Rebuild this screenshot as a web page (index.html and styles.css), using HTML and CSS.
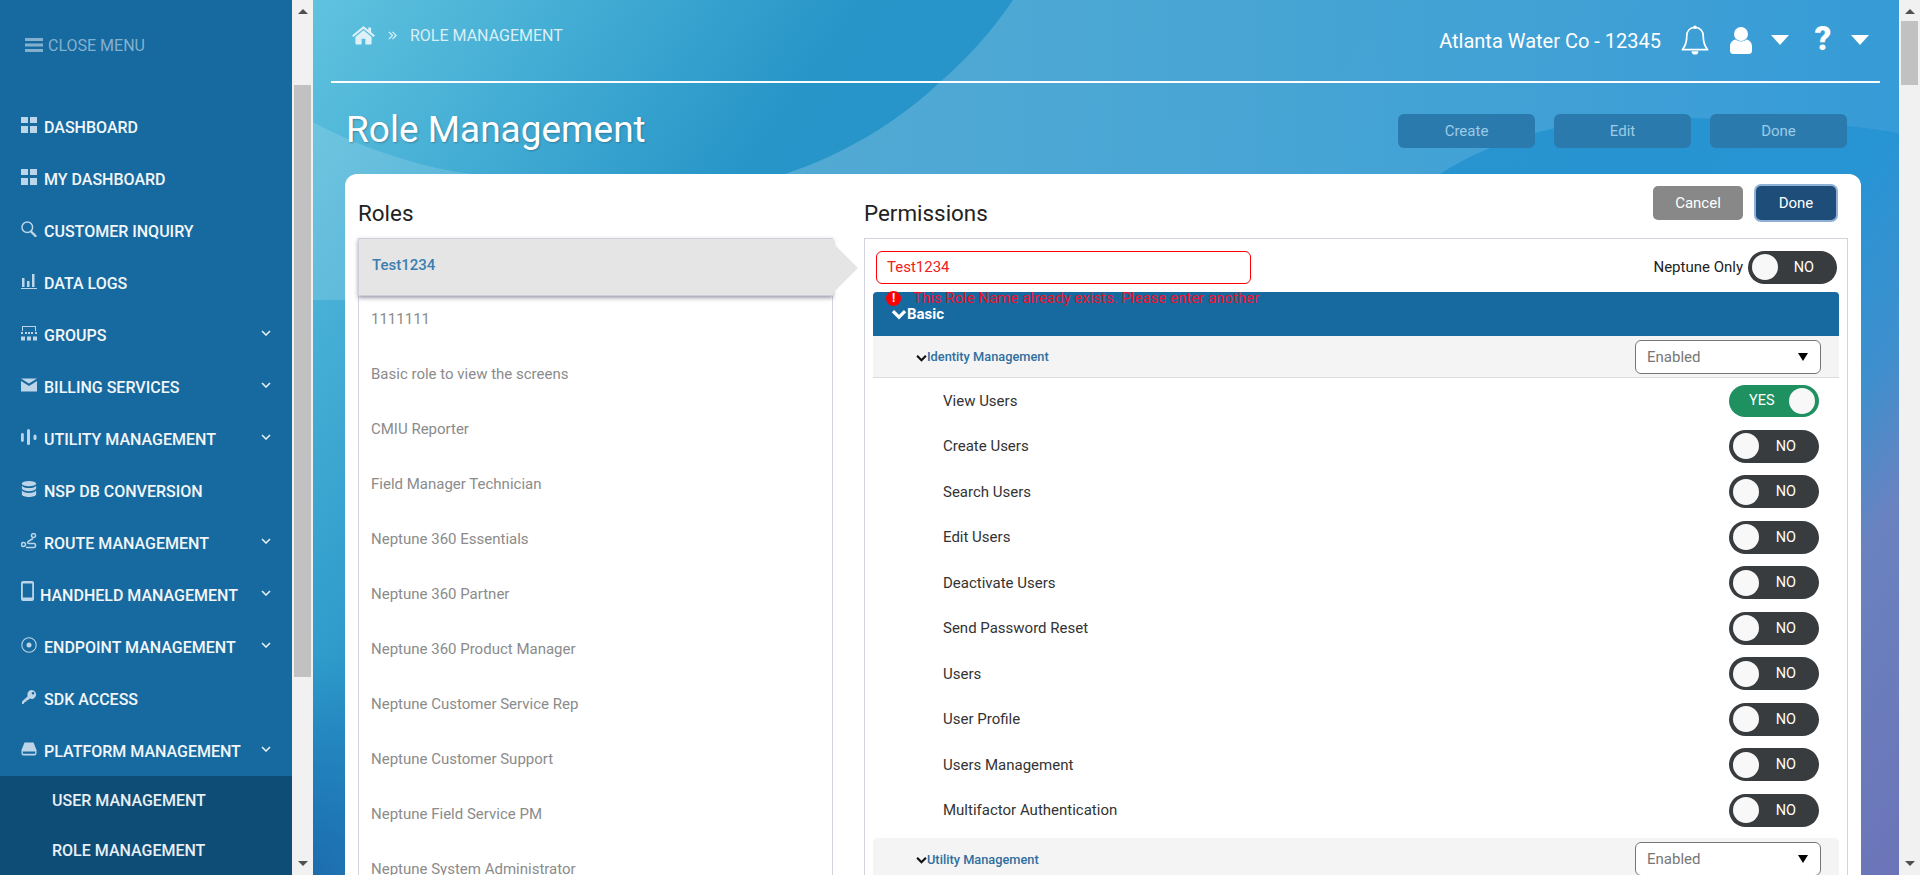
FILE: index.html
```html
<!DOCTYPE html>
<html lang="en">
<head>
<meta charset="utf-8">
<title>Role Management</title>
<link rel="stylesheet" href="styles.css">
</head>
<body>
<aside class="sidebar">
  <div class="close-menu">
    <svg class="burger" viewBox="0 0 18 14"><path d="M0 0h18v3H0zM0 5.500h18v3H0zM0 11h18v3H0z"/></svg>
    <span>CLOSE MENU</span>
  </div>
  <nav class="nav">
    <a class="nav-item"><svg class="ico" viewBox="0 0 16 16"><path d="M0 0h7v6H0zM9 0h7v6H9zM0 9h7v7H0zM9 9h7v7H9z"/></svg><span>DASHBOARD</span></a>
    <a class="nav-item"><svg class="ico" viewBox="0 0 16 16"><path d="M0 0h7v6H0zM9 0h7v6H9zM0 9h7v7H0zM9 9h7v7H9z"/></svg><span>MY DASHBOARD</span></a>
    <a class="nav-item"><svg class="ico" viewBox="0 0 16 16"><circle cx="6.300" cy="6.300" r="5.300" fill="none" stroke="currentColor" stroke-width="1.500"/><path d="M10 10.500l4.500 4.500" stroke="currentColor" stroke-width="2.400" stroke-linecap="round"/></svg><span>CUSTOMER INQUIRY</span></a>
    <a class="nav-item"><svg class="ico" viewBox="0 0 16 16"><path d="M1 5h2.500v9H1zM6 8h2.500v6H6zM11 1h2.500v13H11zM0 15h16v1H0z"/></svg><span>DATA LOGS</span></a>
    <a class="nav-item has-sub"><svg class="ico" viewBox="0 0 16 16"><path d="M1 1h14v5h-1V2H2v4H1zM4 7h2v2H4zM7 7h2v2H7zM10 7h2v2h-2zM0 7h2v2H0zM14 7h2v2h-2zM0 11.500h4v4H0zM6 11.500h4v4H6zM12 11.500h4v4h-4z"/></svg><span>GROUPS</span><svg class="chev" viewBox="0 0 10 6"><path d="M1 1l4 4 4-4" /></svg></a>
    <a class="nav-item has-sub"><svg class="ico" viewBox="0 0 16 16"><path d="M0 1.500h16L8 6.500zM0 4l8 5L16 4v10.500H0z"/></svg><span>BILLING SERVICES</span><svg class="chev" viewBox="0 0 10 6"><path d="M1 1l4 4 4-4" /></svg></a>
    <a class="nav-item has-sub"><svg class="ico" viewBox="0 0 16 16"><rect x="0" y="4" width="2.800" height="9" rx="1.400"/><rect x="6" y="0" width="3" height="16" rx="1.500"/><rect x="12.500" y="5.500" width="3" height="5.500" rx="1.500"/></svg><span>UTILITY MANAGEMENT</span><svg class="chev" viewBox="0 0 10 6"><path d="M1 1l4 4 4-4" /></svg></a>
    <a class="nav-item"><svg class="ico" viewBox="0 0 16 18"><ellipse cx="8" cy="3" rx="8" ry="3"/><path d="M0 5c1 2 4 3 8 3s7-1 8-3v3.500c-1 2-4 3-8 3s-7-1-8-3zM0 10.500c1 2 4 3 8 3s7-1 8-3V15c0 2-4 3-8 3s-8-1-8-3z"/></svg><span>NSP DB CONVERSION</span></a>
    <a class="nav-item has-sub"><svg class="ico" viewBox="0 0 16 16"><circle cx="2.500" cy="11.500" r="2" fill="none" stroke="currentColor" stroke-width="1.500"/><circle cx="12.500" cy="2.500" r="2" fill="none" stroke="currentColor" stroke-width="1.500"/><path d="M12 5.500L7 8.500c-1 1 0 2 1 2h5c2 0 2 4 0 4H5" fill="none" stroke="currentColor" stroke-width="1.500"/></svg><span>ROUTE MANAGEMENT</span><svg class="chev" viewBox="0 0 10 6"><path d="M1 1l4 4 4-4" /></svg></a>
    <a class="nav-item has-sub item-handheld"><svg class="ico-phone" viewBox="0 0 13 20"><path fill-rule="evenodd" d="M2 0h9a2 2 0 0 1 2 2v16a2 2 0 0 1-2 2H2a2 2 0 0 1-2-2V2a2 2 0 0 1 2-2zM1.800 2.500v14h9.400v-14z"/></svg><span>HANDHELD MANAGEMENT</span><svg class="chev" viewBox="0 0 10 6"><path d="M1 1l4 4 4-4" /></svg></a>
    <a class="nav-item has-sub"><svg class="ico" viewBox="0 0 16 16"><circle cx="8" cy="8" r="7.200" fill="none" stroke="currentColor" stroke-width="1.100"/><circle cx="8" cy="8" r="2.500"/></svg><span>ENDPOINT MANAGEMENT</span><svg class="chev" viewBox="0 0 10 6"><path d="M1 1l4 4 4-4" /></svg></a>
    <a class="nav-item"><svg class="ico" viewBox="0 0 16 16"><path fill-rule="evenodd" d="M10.500 1a4.500 4.500 0 1 1-1.800 8.600L7 11.300H5.500v1.500H4L2.500 15H1v-2.500l5.700-5.300A4.500 4.500 0 0 1 10.500 1zM12 3a1.300 1.300 0 1 0 0 2.600A1.300 1.300 0 0 0 12 3z"/></svg><span>SDK ACCESS</span></a>
    <a class="nav-item has-sub"><svg class="ico" viewBox="0 0 16 16"><path fill-rule="evenodd" d="M3.500 1.500h9L15.500 9v3.500a2 2 0 0 1-2 2h-11a2 2 0 0 1-2-2V9zM1.800 10.500v2.300h12.400v-2.300z"/></svg><span>PLATFORM MANAGEMENT</span><svg class="chev" viewBox="0 0 10 6"><path d="M1 1l4 4 4-4" /></svg></a>
    <div class="subnav">
      <a class="sub-item">USER MANAGEMENT</a>
      <a class="sub-item">ROLE MANAGEMENT</a>
    </div>
  </nav>
</aside>
<div class="scrollbar">
  <span class="arrow-up"></span>
  <span class="thumb thumb-side"></span>
  <span class="arrow-down"></span>
</div>

<main class="main">
  <svg class="waves" viewBox="0 0 1586 875" preserveAspectRatio="none" aria-hidden="true">
    <defs>
      <linearGradient id="lightFade" x1="0" x2="1" y1="0" y2="0">
        <stop offset="0" stop-color="#fff" stop-opacity=".2"/>
        <stop offset=".6" stop-color="#fff" stop-opacity=".13"/>
        <stop offset="1" stop-color="#fff" stop-opacity=".07"/>
      </linearGradient>
    </defs>
    <path fill="url(#lightFade)" d="M700 0C678 32 655 58 627 82 585 122 530 155 472 174H1127C1210 120 1320 112 1414 120 1480 120 1540 125 1586 133V0Z"/>
    <path fill="#fff" fill-opacity=".14" d="M0 122C50 150 120 170 159 174V300H0Z"/>
  </svg>

  <header class="topbar">
    <div class="crumbs">
      <svg class="home" viewBox="0 0 24 20"><path d="M12 4.500l-8.500 7v7a1 1 0 0 0 1 1H10v-6h4v6h5.500a1 1 0 0 0 1-1v-7z"/><path d="M12 0L0 10l1.400 1.600L12 2.800l10.600 8.800L24 10l-4-3.400V1.500h-3v2.600z"/></svg>
      <svg class="crumb-sep" viewBox="0 0 10 10"><path d="M1 1l4 4-4 4M5 1l4 4-4 4"/></svg>
      <span class="crumb-text">ROLE MANAGEMENT</span>
    </div>
    <div class="top-right">
      <span class="org">Atlanta Water Co - 12345</span>
      <svg class="bell" viewBox="0 0 28 32"><path d="M14 2.500c-5.500 0-8.500 4-8.500 9 0 6-1 9.500-4.500 14h26c-3.500-4.500-4.500-8-4.500-14 0-5-3-9-8.500-9z" fill="none" stroke="#fff" stroke-width="1.800" stroke-linejoin="round"/><circle cx="14" cy="2.200" r="1.800" fill="#fff"/><path d="M10.500 27a3.500 3.500 0 0 0 7 0z" fill="#fff"/></svg>
      <svg class="user" viewBox="0 0 22 27"><circle cx="11" cy="7" r="7"/><path d="M5.500 12.500c3 2.500 8 2.500 11 0 3 .5 5.500 3 5.500 7v4a3.500 3.500 0 0 1-3.500 3.500h-15A3.500 3.500 0 0 1 0 23.500v-4c0-4 2.500-6.500 5.500-7z"/></svg>
      <span class="caret caret-user"></span>
      <span class="help">?</span>
      <span class="caret"></span>
    </div>
  </header>

  <div class="title-row">
    <h1 class="title">Role Management</h1>
    <div class="title-actions">
      <button class="ghost-btn">Create</button>
      <button class="ghost-btn">Edit</button>
      <button class="ghost-btn">Done</button>
    </div>
  </div>

  <section class="card">
    <div class="roles">
      <h2 class="col-title">Roles</h2>
      <ul class="role-list">
        <li class="role role-active">Test1234</li>
        <li class="role">1111111</li>
        <li class="role">Basic role to view the screens</li>
        <li class="role">CMIU Reporter</li>
        <li class="role">Field Manager Technician</li>
        <li class="role">Neptune 360 Essentials</li>
        <li class="role">Neptune 360 Partner</li>
        <li class="role">Neptune 360 Product Manager</li>
        <li class="role">Neptune Customer Service Rep</li>
        <li class="role">Neptune Customer Support</li>
        <li class="role">Neptune Field Service PM</li>
        <li class="role">Neptune System Administrator</li>
      </ul>
    </div>
    <div class="perms">
      <div class="perm-head">
        <h2 class="col-title">Permissions</h2>
        <div class="perm-actions">
          <button class="btn btn-cancel">Cancel</button>
          <button class="btn btn-done">Done</button>
        </div>
      </div>
      <div class="perm-box">
        <div class="name-row">
          <div class="name-input">Test1234</div>
          <div class="only"><span>Neptune Only</span><span class="toggle toggle-lg"><i class="knob"></i><b>NO</b></span></div>
        </div>
        <div class="name-error"><span class="err-dot">!</span><span>This Role Name already exists. Please enter another</span></div>
        <div class="group-bar"><svg class="group-chev" viewBox="0 0 14 10"><path d="M1.500 2l5.500 5.500L12.500 2"/></svg>Basic</div>
        <div class="sub-head">
          <div class="sub-name"><svg class="sub-chev" viewBox="0 0 10 7"><path d="M1 1.500l4 4 4-4"/></svg>Identity Management</div>
          <div class="select">Enabled<span class="select-caret"></span></div>
        </div>
        <div class="perm-row"><span>View Users</span><span class="toggle toggle-on"><b>YES</b><i class="knob"></i></span></div>
        <div class="perm-row"><span>Create Users</span><span class="toggle"><i class="knob"></i><b>NO</b></span></div>
        <div class="perm-row"><span>Search Users</span><span class="toggle"><i class="knob"></i><b>NO</b></span></div>
        <div class="perm-row"><span>Edit Users</span><span class="toggle"><i class="knob"></i><b>NO</b></span></div>
        <div class="perm-row"><span>Deactivate Users</span><span class="toggle"><i class="knob"></i><b>NO</b></span></div>
        <div class="perm-row"><span>Send Password Reset</span><span class="toggle"><i class="knob"></i><b>NO</b></span></div>
        <div class="perm-row"><span>Users</span><span class="toggle"><i class="knob"></i><b>NO</b></span></div>
        <div class="perm-row"><span>User Profile</span><span class="toggle"><i class="knob"></i><b>NO</b></span></div>
        <div class="perm-row"><span>Users Management</span><span class="toggle"><i class="knob"></i><b>NO</b></span></div>
        <div class="perm-row"><span>Multifactor Authentication</span><span class="toggle"><i class="knob"></i><b>NO</b></span></div>
        <div class="sub-head sub-head-next">
          <div class="sub-name"><svg class="sub-chev" viewBox="0 0 10 7"><path d="M1 1.500l4 4 4-4"/></svg>Utility Management</div>
          <div class="select">Enabled<span class="select-caret"></span></div>
        </div>
      </div>
    </div>
  </section>
</main>

<div class="scrollbar">
  <span class="arrow-up"></span>
  <span class="thumb thumb-page"></span>
  <span class="arrow-down"></span>
</div>
</body>
</html>
```
FILE: styles.css
```css
* { box-sizing: border-box; }
html, body { margin: 0; height: 100%; }
body {
  display: flex;
  height: 875px;
  overflow: hidden;
  font-family: Roboto, "Liberation Sans", sans-serif;
  background: #fff;
}

/* Sidebar */
.sidebar {
  flex: 0 0 292px;
  height: 875px;
  overflow: hidden;
  background: #176a9f;
  color: #f2f6fa;
}
.close-menu {
  display: flex;
  align-items: center;
  gap: 5px;
  height: 42px;
  margin: 24px 0 34px;
  padding-left: 25px;
  color: #84b0d0;
  font-size: 16px;
}
.burger { width: 18px; height: 14px; fill: currentColor; }
.nav { display: block; }
.nav-item {
  display: flex;
  align-items: center;
  height: 52px;
  padding: 2px 0 0 21px;
  font-size: 16px;
  font-weight: 500;
  white-space: nowrap;
}
.ico {
  flex: 0 0 16px;
  width: 16px;
  height: 16px;
  margin: -5px 7px 0 0;
  fill: #bcd5e8;
  color: #bcd5e8;
}
.ico-phone {
  flex: 0 0 13px;
  width: 13px;
  height: 20px;
  margin: -8px 6px 0 0;
  fill: #bcd5e8;
}
.chev {
  position: absolute;
  left: 261px;
  width: 10px;
  height: 6px;
  margin-top: -4px;
  fill: none;
  stroke: #e4eef6;
  stroke-width: 1.600;
}
.subnav { background: #0e4d76; }
.sub-item {
  display: block;
  height: 50px;
  padding-left: 52px;
  line-height: 50px;
  font-size: 16px;
  font-weight: 500;
  color: #e8eff5;
}

/* Scrollbars */
.scrollbar {
  position: relative;
  flex: 0 0 21px;
  height: 875px;
  background: #f1f1f1;
}
.arrow-up, .arrow-down {
  position: absolute;
  left: 6px;
  width: 0;
  height: 0;
  border-left: 5px solid transparent;
  border-right: 5px solid transparent;
}
.arrow-up { top: 9px; border-bottom: 5px solid #505050; }
.arrow-down { bottom: 9px; border-top: 5px solid #505050; }
.thumb {
  position: absolute;
  left: 2px;
  width: 17px;
  background: #c1c1c1;
}
.thumb-side { top: 85px; height: 592px; }
.thumb-page { top: 21px; height: 64px; }

/* Main */
.main {
  position: relative;
  flex: 1 1 auto;
  min-width: 0;
  height: 875px;
  overflow: hidden;
  background:
    radial-gradient(180px 220px at 0 100%, #1c6cae, rgba(28, 108, 174, 0)),
    linear-gradient(125deg, #5fc3df 0%, #2795c8 25%, #2794d4 76%, #3f8fcd 83%, #6a82c0 88%, #6b74b8 100%);
}
.waves {
  position: absolute;
  left: 0;
  top: 0;
  width: 100%;
  height: 100%;
}
.topbar {
  position: relative;
  display: flex;
  justify-content: space-between;
  height: 83px;
  margin: 0 19px 0 18px;
  border-bottom: 2px solid #fff;
}
.crumbs {
  display: flex;
  align-items: center;
  height: 71px;
  padding-left: 21px;
  color: #d9eff7;
}
.home { width: 23px; height: 19px; fill: #dff1f8; margin-right: 13px; }
.crumb-sep {
  width: 9px;
  height: 9px;
  margin-right: 13px;
  fill: none;
  stroke: #dff1f8;
  stroke-width: 1.300;
}
.crumb-text { font-size: 16px; }
.top-right {
  display: flex;
  align-items: center;
  height: 81px;
  padding-right: 11px;
  color: #fff;
}
.org { font-size: 20px; margin-right: 20px; }
.bell { width: 28px; height: 31px; margin-right: 21px; }
.user { width: 22px; height: 27px; fill: #fff; margin-right: 19px; }
.caret {
  width: 0;
  height: 0;
  margin-top: -2px;
  border-left: 9px solid transparent;
  border-right: 9px solid transparent;
  border-top: 10px solid #fff;
}
.caret-user { margin-right: 25px; }
.help {
  width: 18px;
  margin: -4px 19px 0 0;
  font-size: 33px;
  font-weight: 900;
  line-height: 30px;
  text-align: center;
}
.title-row {
  position: relative;
  display: flex;
  justify-content: space-between;
  align-items: flex-start;
  height: 91px;
  padding: 0 52px 0 33px;
}
.title {
  margin: 24px 0 0;
  font-size: 37px;
  font-weight: 400;
  line-height: 46px;
  color: #fff;
  text-shadow: 1px 1px 2px rgba(0, 0, 0, .25);
}
.title-actions { display: flex; gap: 19px; padding-top: 31px; }
.ghost-btn {
  width: 137px;
  height: 34px;
  padding: 0;
  border: 0;
  border-radius: 6px;
  background: #2b7aae;
  color: #9ccbe6;
  font: 400 15px Roboto, sans-serif;
}

/* Card */
.card {
  position: relative;
  display: flex;
  gap: 31px;
  height: 900px;
  margin: 0 38px 0 32px;
  padding: 0 13px;
  border-radius: 12px 12px 0 0;
  background: #fff;
}
.roles { flex: 0 0 475px; }
.perms { flex: 1 1 auto; min-width: 0; }
.col-title {
  margin: 0;
  height: 64px;
  padding-top: 25px;
  font-size: 22.400px;
  font-weight: 400;
  line-height: 28px;
  color: #222;
}
.role-list {
  margin: 0;
  padding: 0;
  list-style: none;
  border: 1px solid #d3d3de;
  border-top: 0;
}
.role {
  height: 55px;
  padding-left: 12px;
  line-height: 47px;
  font-size: 15px;
  color: #8b8b8b;
}
.role-active {
  position: relative;
  height: 58px;
  margin: 0 -1px;
  padding-left: 13px;
  line-height: 52px;
  background: #e5e5e5;
  color: #3a7fb0;
  font-weight: 500;
  border: 1px solid #cfcfda;
  border-right: 0;
  box-shadow: 0 2px 4px rgba(60, 60, 90, .5);
}
.role-active::after {
  content: "";
  position: absolute;
  left: 100%;
  top: 4px;
  border-top: 25px solid transparent;
  border-bottom: 25px solid transparent;
  border-left: 25px solid #e5e5e5;
}
.perm-head { display: flex; justify-content: space-between; }
.perm-actions { display: flex; gap: 13px; padding: 12px 12px 0 0; }
.btn {
  height: 34px;
  padding: 0;
  border: 0;
  border-radius: 5px;
  color: #fff;
  font: 400 15px Roboto, sans-serif;
}
.btn-cancel { width: 90px; background: #888; }
.btn-done {
  width: 80px;
  background: #1d4d78;
  box-shadow: 0 0 0 2px #8db0d4;
}
.perm-box {
  position: relative;
  height: 700px;
  padding-top: 11px;
  border: 1px solid #d3d3de;
  border-bottom: 0;
}
.name-row {
  display: flex;
  justify-content: space-between;
  align-items: center;
  height: 34px;
  padding: 0 10px 0 11px;
}
.name-input {
  width: 375px;
  height: 33px;
  padding-left: 10px;
  border: 1px solid #f00;
  border-radius: 6px;
  color: #f02020;
  font-size: 15px;
  line-height: 30px;
}
.only {
  display: flex;
  align-items: center;
  gap: 5px;
  font-size: 15px;
  color: #222;
}
.name-error {
  position: absolute;
  left: 21px;
  top: 51px;
  z-index: 1;
  display: flex;
  align-items: center;
  gap: 12px;
  font-size: 15px;
  line-height: 16px;
  color: #f0102a;
  white-space: nowrap;
}
.err-dot {
  flex: 0 0 15px;
  height: 15px;
  border-radius: 50%;
  background: #f00;
  color: #fff;
  font-size: 12px;
  font-weight: 700;
  line-height: 15px;
  text-align: center;
}
.group-bar {
  display: flex;
  align-items: flex-start;
  height: 44px;
  margin: 8px 8px 0;
  padding: 14px 0 0 18px;
  border-radius: 4px 4px 0 0;
  background: #176a9f;
  color: #fff;
  font-size: 15px;
  font-weight: 700;
  line-height: 16px;
}
.group-chev {
  width: 16px;
  height: 11px;
  margin-top: 3px;
  fill: none;
  stroke: #fff;
  stroke-width: 3;
}
.sub-head {
  display: flex;
  justify-content: space-between;
  align-items: center;
  height: 42px;
  margin: 0 8px;
  padding: 0 18px 0 43px;
  border-bottom: 1px solid #ddd;
  background: #f4f4f4;
}
.sub-head-next {
  margin-top: 5px;
  border-bottom: 0;
  border-radius: 5px 5px 0 0;
}
.sub-name {
  display: flex;
  align-items: center;
  font-size: 12.800px;
  font-weight: 500;
  color: #2f6f9f;
}
.sub-chev {
  width: 11px;
  height: 8px;
  margin-top: 2px;
  fill: none;
  stroke: #111;
  stroke-width: 2;
}
.select {
  position: relative;
  width: 186px;
  height: 34px;
  padding-left: 11px;
  border: 1px solid #777;
  border-radius: 6px;
  background: #fff;
  color: #777;
  font-size: 15px;
  line-height: 32px;
}
.select-caret {
  position: absolute;
  right: 12px;
  top: 12px;
  border-left: 5px solid transparent;
  border-right: 5px solid transparent;
  border-top: 8px solid #000;
}
.perm-row {
  display: flex;
  justify-content: space-between;
  align-items: center;
  height: 45.500px;
  margin: 0 8px;
  padding: 0 20px 0 70px;
  font-size: 15px;
  color: #333;
}
.toggle {
  position: relative;
  display: flex;
  align-items: center;
  justify-content: space-between;
  width: 90px;
  height: 33px;
  padding: 0 23px 0 4px;
  border-radius: 17px;
  background: #383c3e;
  color: #fff;
}
.toggle b { font-size: 14.500px; font-weight: 400; }
.toggle-lg { width: 89px; }
.toggle-on { height: 32px; padding: 0 4px 0 20px; background: #1f9060; }
.knob {
  width: 26px;
  height: 26px;
  border-radius: 50%;
  background: #f8f8f8;
}
```
